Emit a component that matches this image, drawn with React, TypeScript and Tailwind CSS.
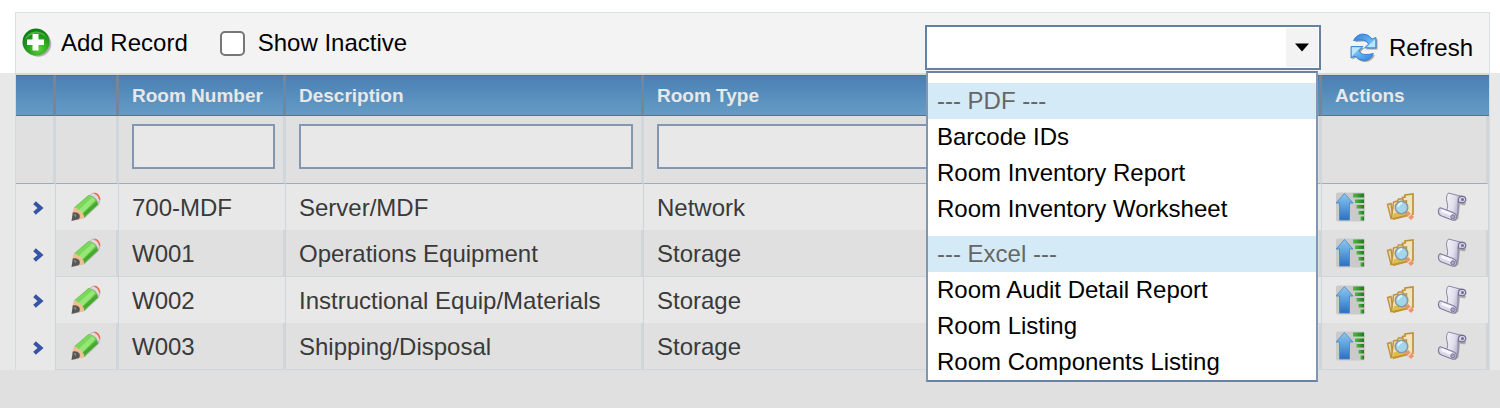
import { useState } from "react";
import type { MouseEvent } from "react";

const ROOMS = [
  { number: "700-MDF", description: "Server/MDF", type: "Network" },
  { number: "W001", description: "Operations Equipment", type: "Storage" },
  { number: "W002", description: "Instructional Equip/Materials", type: "Storage" },
  { number: "W003", description: "Shipping/Disposal", type: "Storage" },
];

const REPORT_GROUPS = [
  {
    title: "--- PDF ---",
    items: ["Barcode IDs", "Room Inventory Report", "Room Inventory Worksheet"],
  },
  {
    title: "--- Excel ---",
    items: ["Room Audit Detail Report", "Room Listing", "Room Components Listing"],
  },
];

function AddIcon() {
  return (
    <svg viewBox="0 0 30 30" className="size-[30px]" aria-hidden="true">
      <defs>
        <radialGradient id="addFill" cx="0.6" cy="0.75" r="0.75">
          <stop offset="0" stopColor="#5fd03a" />
          <stop offset="0.55" stopColor="#25a01c" />
          <stop offset="1" stopColor="#0b7a14" />
        </radialGradient>
      </defs>
      <circle cx="16.5" cy="16" r="12.8" fill="#555" opacity="0.35" />
      <circle cx="15.5" cy="15" r="13.2" fill="#888" opacity="0.35" />
      <circle cx="14" cy="14" r="13.5" fill="url(#addFill)" />
      <path d="M3 12a11.5 10.5 0 0 1 22-2q-5-5-11-4.500T3 12z" fill="#8ad873" opacity="0.5" />
      <path d="M10.500 6h6v5.500h5.500v5.500h-5.500v5.500h-6V17H5v-5.500h5.500z" fill="#fff" />
    </svg>
  );
}

function RefreshIcon() {
  return (
    <svg viewBox="0 0 30 30" className="size-[30px]" aria-hidden="true">
      <defs>
        <linearGradient id="refreshFill" x1="0" y1="0" x2="1" y2="0.6">
          <stop offset="0" stopColor="#2b7fe0" />
          <stop offset="1" stopColor="#7cc4f8" />
        </linearGradient>
        <linearGradient id="refreshFillBack" x1="1" y1="1" x2="0" y2="0.2">
          <stop offset="0" stopColor="#2b7fe0" />
          <stop offset="1" stopColor="#8fd2fb" />
        </linearGradient>
      </defs>
      <g fill="#333" opacity="0.4" transform="translate(1.500 1.500)">
        <path d="M4.500 7.500Q8 1 14 1q5.500 0 9 5l4-1.500V15H15.500l4-4Q17 6.500 12 7q-3 0-7.500.5z" />
        <path d="M24.500 20.500Q21 27.500 15 27.500q-5.500 0-9-4.500L2 25V13.500h12l-4 4Q12 22 17 21.500q3 0 7.500-1z" />
      </g>
      <path d="M4.500 7.500Q8 1 14 1q5.500 0 9 5l4-1.500V15H15.500l4-4Q17 6.500 12 7q-3 0-7.500.5z" fill="url(#refreshFill)" stroke="#2474d0" strokeWidth="0.8" strokeLinejoin="round" />
      <path d="M24.500 20.500Q21 27.500 15 27.500q-5.500 0-9-4.500L2 25V13.500h12l-4 4Q12 22 17 21.500q3 0 7.500-1z" fill="url(#refreshFillBack)" stroke="#2474d0" strokeWidth="0.8" strokeLinejoin="round" />
      <path d="M18 14l3.500-3.500L26 6.500V14z" fill="#b9e6ff" />
      <path d="M3 23V14.500h8.500l-4 4z" fill="#b9e6ff" />
    </svg>
  );
}

function PencilIcon() {
  return (
    <svg viewBox="0 0 30 30" className="size-[30px]" aria-hidden="true">
      <path d="M14 26l14-13 1-4L12 24 2 29z" fill="#777" opacity="0.3" />
      <path d="M3 15.500L17.500 3l5 .5 4 4 .5 5L13 26z" fill="#66c649" />
      <path d="M3.500 15.500L18 3.500l4 1L8 18.500z" fill="#7cd65c" />
      <path d="M7 18.500L21.500 5l3 3L11 22z" fill="#95e876" />
      <path d="M12.500 25.500L27 12.500l-1-3.500L12 21.500z" fill="#48a832" />
      <path d="M18.500 3.500L22 1q6 .5 7 7L27 12q-1-7-8.500-8.500z" fill="#dedcdc" stroke="#a5a3a3" strokeWidth="0.7" />
      <path d="M23.500 1.200q4.500 1 5.200 6.500" fill="none" stroke="#ea6b50" strokeWidth="1.600" />
      <path d="M3 15.500q3-.5 4.500 2.500 3 0 3.500 3 2.500 1.500 2 5L5.500 28 1 22z" fill="#ecc093" />
      <path d="M1.800 20.500Q6 19.500 8.500 22.500q1 2.500-.5 4.500l-7.500 2z" fill="#565656" />
      <path d="M2.500 22l3 .5-1 3z" fill="#8a8a8a" />
    </svg>
  );
}

function ExpandIcon() {
  return (
    <svg viewBox="0 0 12 14" className="h-[14px] w-[12px]" aria-hidden="true">
      <path d="M1.500 1.800L7.500 7l-6 5.200" fill="none" stroke="#3554a5" strokeWidth="4" />
    </svg>
  );
}

function SortIcon() {
  return (
    <svg viewBox="0 0 30 30" className="size-[30px]" aria-hidden="true">
      <defs>
        <linearGradient id="arrowFill" x1="0" y1="0" x2="0" y2="1">
          <stop offset="0" stopColor="#8fc6ee" />
          <stop offset="0.5" stopColor="#5a9edb" />
          <stop offset="1" stopColor="#2f6fbd" />
        </linearGradient>
        <linearGradient id="barFill" x1="0" y1="0" x2="1" y2="0">
          <stop offset="0" stopColor="#55b848" />
          <stop offset="1" stopColor="#1c7a1c" />
        </linearGradient>
      </defs>
      <rect x="1" y="0.500" width="29" height="29" rx="2" fill="#cacaca" />
      <path d="M9.500 1.500L18 11h-3.500v17h-10V11H1z" fill="url(#arrowFill)" stroke="#4685c5" strokeWidth="0.8" />
      <g fill="url(#barFill)">
        <rect x="18" y="1.500" width="11" height="4" />
        <rect x="20" y="7.500" width="9" height="3.500" />
        <rect x="21.500" y="13" width="7.500" height="3.500" />
        <rect x="23.500" y="19" width="5.500" height="3.500" />
        <rect x="25.500" y="24.500" width="3.500" height="4" />
      </g>
    </svg>
  );
}

function FolderSearchIcon() {
  return (
    <svg viewBox="0 0 30 30" className="size-[30px]" aria-hidden="true">
      <path d="M16.500 9V5.500l2.500-.5V3l8-1v20L8 27z" fill="#efe3c0" stroke="#bf9138" strokeWidth="1.700" />
      <path d="M1.500 12.500L5 11.500 7 26l-2 .5z" fill="#ead7a4" stroke="#bf9138" strokeWidth="1.400" />
      <path d="M5.500 26.500L7.500 10l4-1 1-2h4l1 2h3L20 23z" fill="#efe1b8" stroke="#bf9138" strokeWidth="1.500" />
      <path d="M6.500 26l1.500-5L20 20.500l-1 2.500z" fill="#e2bd40" />
      <path d="M20.500 20.500l6 6" stroke="#ec9468" strokeWidth="4.500" />
      <path d="M22 25l4-4" stroke="#f7d3bf" strokeWidth="1.200" />
      <circle cx="15.500" cy="15.500" r="6.200" fill="#a4d6ea" stroke="#8b98a0" strokeWidth="1.600" />
      <path d="M12 15q.5-3.500 4-4" fill="none" stroke="#dff3fb" strokeWidth="1.800" />
    </svg>
  );
}

function ScrollIcon() {
  return (
    <svg viewBox="0 0 30 30" className="size-[30px]" aria-hidden="true">
      <defs>
        <linearGradient id="scrollFill" x1="0" y1="0" x2="1" y2="0.300">
          <stop offset="0" stopColor="#f6f5fb" />
          <stop offset="0.6" stopColor="#e0deec" />
          <stop offset="1" stopColor="#a09dbd" />
        </linearGradient>
      </defs>
      <path d="M22 9l7.500 2-2 2.500-4.500-1-1.500 14-3 2.500-14-5z" fill="#555" opacity="0.4" />
      <path d="M11.500 1L25 4.500q-4.500 2-4 8 1 8-2 14.500L8 20q4-3 2-10-1.500-6 1.500-9z" fill="url(#scrollFill)" stroke="#817e9f" strokeWidth="0.9" />
      <path d="M21.500 10Q20.500 4.500 25 4.200q4 .3 3.800 4-.8 3-4 2.500z" fill="#d6d3e4" stroke="#716e92" strokeWidth="1.200" />
      <circle cx="25.500" cy="7.500" r="1.500" fill="#716e92" />
      <path d="M4 16L16 20.500q4.500 2 3 6-1 2.300-4 1.500L3.500 23.500Q1 21.500 1.500 18.500q.5-3 2.500-2.500z" fill="#dcdae8" stroke="#817e9f" strokeWidth="1.200" />
      <path d="M4.500 18.500l10 4" stroke="#f8f7fc" strokeWidth="2.600" />
      <circle cx="15.800" cy="24.800" r="2" fill="#aaa7c3" stroke="#716e92" strokeWidth="0.9" />
    </svg>
  );
}

function ReportPicker() {
  const [open, setOpen] = useState(true);
  const [report, setReport] = useState("");

  const handleMouseDown = (e: MouseEvent) => {
    e.preventDefault();
    setOpen(!open);
  };

  const handlePick = (name: string) => {
    setReport(name);
    setOpen(false);
  };

  return (
    <div className="relative w-[396px]">
      <select
        aria-label="Report"
        value={report}
        onMouseDown={handleMouseDown}
        onChange={(e) => setReport(e.target.value)}
        className="block h-[45px] w-full appearance-none border-2 border-[#6481a3] bg-white px-2.5 text-black outline-none"
      >
        <option value=""></option>
        {REPORT_GROUPS.map((group) => (
          <optgroup key={group.title} label={group.title}>
            {group.items.map((item) => (
              <option key={item}>{item}</option>
            ))}
          </optgroup>
        ))}
      </select>
      <div className="pointer-events-none absolute inset-y-[3px] right-[3px] flex w-8 items-center justify-center bg-[#f3f3f3]">
        <svg viewBox="0 0 14 9" className="h-[9px] w-[14px]" aria-hidden="true">
          <path d="M0 0.500h14L7 8.500z" fill="#000" />
        </svg>
      </div>

      {open && (
        <div className="absolute top-[46px] right-[3px] left-px z-10 flex flex-col gap-[9px] border-2 border-[#8196b0] border-t-[#6883a3] border-b-[#6883a3] bg-white pt-[10px]">
          {REPORT_GROUPS.map((group) => (
            <ul key={group.title}>
              <li className="bg-[#d4ebf7] px-[9px] leading-[36px] text-[#666]">{group.title}</li>
              {group.items.map((item) => (
                <li key={item}>
                  <button
                    type="button"
                    onClick={() => handlePick(item)}
                    className="block w-full px-[9px] text-left leading-[36px] text-black hover:bg-[#eef7fc]"
                  >
                    {item}
                  </button>
                </li>
              ))}
            </ul>
          ))}
        </div>
      )}
    </div>
  );
}

function Toolbar() {
  return (
    <div className="bg-white px-[10px] pt-3 pl-[15px]">
      <div className="flex items-start justify-between border border-b-0 border-[#d9dfe4] bg-[#f3f3f3] pt-3 pr-4 pb-[3px] pl-1.5">
        <div className="flex h-9 items-center gap-8">
          <button type="button" className="flex items-center gap-[9px]">
            <AddIcon />
            Add Record
          </button>
          <label className="flex items-center gap-[13px]">
            <input
              type="checkbox"
              className="size-[25px] appearance-none rounded-[5px] border-2 border-[#767676] bg-white checked:bg-[#3b78c2]"
            />
            Show Inactive
          </label>
        </div>
        <div className="flex items-center gap-7">
          <ReportPicker />
          <a href="#refresh" className="flex items-center gap-[10px]">
            <RefreshIcon />
            Refresh
          </a>
        </div>
      </div>
    </div>
  );
}

const headCell =
  "h-[41px] border-t border-r-[3px] border-b border-t-[#3c76ad] border-r-[#74869a] border-b-[#5d6f84] pl-[13px] text-left text-[19px] font-bold";
const filterCell =
  "h-[68px] border-r-[3px] border-b border-r-[#d0d6db] border-b-[#9eabc0] bg-[#e0e0e0] pt-2 pr-2 pl-[13px] align-top";
const filterInput =
  "block h-[45px] w-full border-2 border-[#8496b0] bg-[#e8e8e8] px-2 outline-none";
const plainCell = "h-[46px] border-r border-[#cfd5da] pl-[13px]";
const stripedCell = "h-[47px] border-r-[3px] border-b border-[#cfd5da] bg-[#e0e0e0] pl-[13px]";

function RoomTable() {
  return (
    <div className="bg-[#e8e8e8] pr-[10px] pl-[15px]">
      <table className="w-full table-fixed border-separate border-spacing-0 border-x border-t-2 border-[#d5dadd] text-[#3a3a3a]">
        <colgroup>
          <col className="w-[40px]" />
          <col className="w-[63px]" />
          <col className="w-[167px]" />
          <col className="w-[358px]" />
          <col />
          <col className="w-[167px]" />
        </colgroup>
        <thead>
          <tr className="bg-linear-to-b from-[#4a7fb3] to-[#659dc6] text-[#e8e8e8]">
            <td className={headCell}></td>
            <td className={headCell}></td>
            <th className={headCell}>Room Number</th>
            <th className={headCell}>Description</th>
            <th className={headCell}>Room Type</th>
            <th className="h-[41px] border-t border-b border-t-[#3c76ad] border-b-[#5d6f84] pl-[13px] text-left text-[19px] font-bold">
              Actions
            </th>
          </tr>
          <tr>
            <td className={filterCell}></td>
            <td className={filterCell}></td>
            <td className={filterCell}>
              <input type="text" aria-label="Filter room number" className={filterInput} />
            </td>
            <td className={filterCell}>
              <input type="text" aria-label="Filter description" className={filterInput} />
            </td>
            <td className={filterCell}>
              <input type="text" aria-label="Filter room type" className={filterInput} />
            </td>
            <td className={filterCell}></td>
          </tr>
        </thead>
        <tbody>
          {ROOMS.map((room, i) => {
            const cell = i % 2 === 0 ? plainCell : stripedCell;
            return (
              <tr key={room.number}>
                <td className="border-r border-[#cfd5da] pt-0.5 pl-[17px]">
                  <button type="button" aria-label="Expand" className="block">
                    <ExpandIcon />
                  </button>
                </td>
                <td className={cell}>
                  <button type="button" aria-label="Edit" className="ml-0.5 block">
                    <PencilIcon />
                  </button>
                </td>
                <td className={cell + " pt-0.5"}>{room.number}</td>
                <td className={cell + " pt-0.5"}>{room.description}</td>
                <td className={cell + " pt-0.5"}>{room.type}</td>
                <td className={cell}>
                  <div className="flex items-center gap-[21px]">
                    <button type="button" aria-label="Sort"><SortIcon /></button>
                    <button type="button" aria-label="Browse"><FolderSearchIcon /></button>
                    <button type="button" aria-label="Log"><ScrollIcon /></button>
                  </div>
                </td>
              </tr>
            );
          })}
        </tbody>
      </table>
    </div>
  );
}

export default function App() {
  return (
    <div className="min-h-screen bg-[#e0e0e0] font-['Liberation_Sans',Arial,sans-serif] text-[24px] leading-[30px] text-black">
      <Toolbar />
      <RoomTable />
    </div>
  );
}
